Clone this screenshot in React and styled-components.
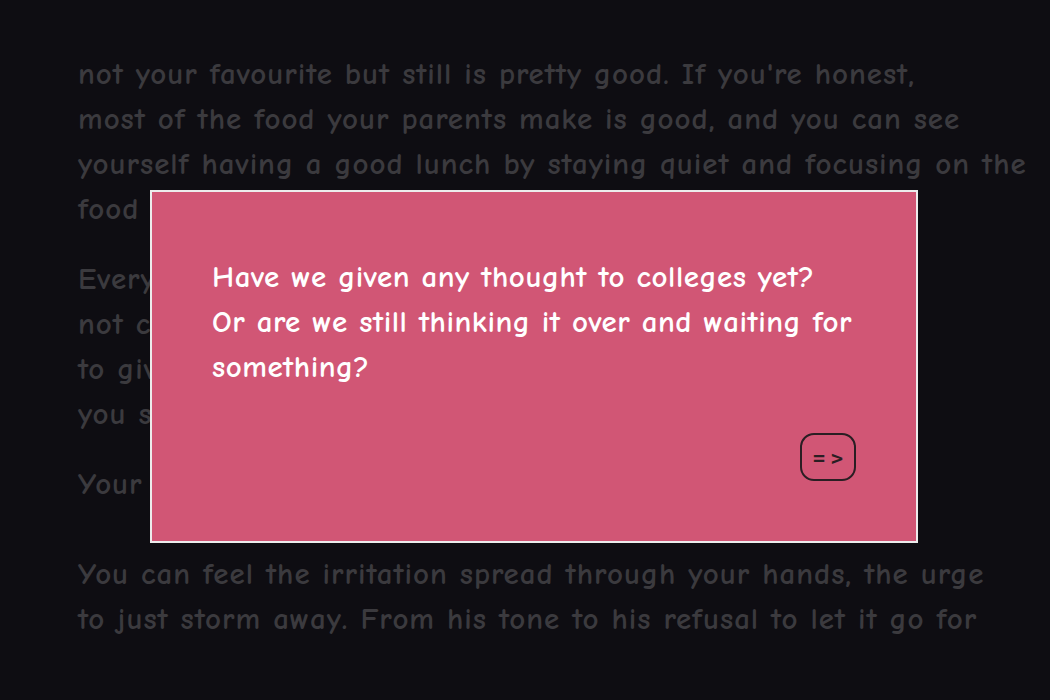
import React from 'react';
import styled, { createGlobalStyle } from 'styled-components';

const GlobalStyle = createGlobalStyle`
  html, body {
    margin: 0;
    padding: 0;
    background: #0e0d12;
  }
  body {
    font-family: "Comic Sans MS", "Comic Neue", "DejaVu Sans", sans-serif;
  }
`;

const Page = styled.div`
  width: 100%;
  height: 100vh;
  overflow: hidden;
  background: #0e0d12;
`;

const Story = styled.div`
  padding: 52px 0 0 78px;
  color: #3b3a3e;
  font-size: 31px;
  font-weight: 700;
  letter-spacing: 0.95px;
  line-height: 45px;
  white-space: nowrap;
`;

const Para = styled.p`
  margin: 0 0 ${(p) => (p.$wide ? '45px' : '25px')};
`;

const Overlay = styled.div`
  position: fixed;
  left: 150px;
  top: 190px;
  width: 768px;
  height: 353px;
  box-sizing: border-box;
  border: 2px solid #ececec;
  background: #d15675;
  padding: 60px;
  display: flex;
  flex-direction: column;
`;

const Question = styled.p`
  margin: 3px 0 0;
  color: #ffffff;
  font-size: 31px;
  font-weight: 700;
  letter-spacing: 0.5px;
  line-height: 45px;
  white-space: nowrap;
`;

const NextButton = styled.button`
  margin-top: auto;
  align-self: flex-end;
  width: 56px;
  height: 48px;
  border: 2px solid #2a1e23;
  border-radius: 14px;
  background: transparent;
  color: #2a1e23;
  font-family: "DejaVu Sans Mono", monospace;
  font-weight: bold;
  font-size: 20px;
  letter-spacing: 6px;
  padding: 2px 0 0 6px;
  display: flex;
  align-items: center;
  justify-content: center;
  cursor: pointer;
`;

export default function App() {
  return (
    <Page>
      <GlobalStyle />
      <Story>
        <Para>
          not your favourite but still is pretty good. If you're honest,<br />
          most of the food your parents make is good, and you can see<br />
          yourself having a good lunch by staying quiet and focusing on the<br />
          food in front of you.
        </Para>
        <Para>
          Every now and then your dad asks a question or two, but<br />
          not casually, more like he's checking if you're able<br />
          to give him an answer he'll be pleased with, and<br />
          you stay quiet.
        </Para>
        <Para $wide>Your mom clears her throat.</Para>
        <Para>
          You can feel the irritation spread through your hands, the urge<br />
          to just storm away. From his tone to his refusal to let it go for
        </Para>
      </Story>
      <Overlay>
        <Question>
          Have we given any thought to colleges yet?<br />
          Or are we still thinking it over and waiting for<br />
          something?
        </Question>
        <NextButton>=&gt;</NextButton>
      </Overlay>
    </Page>
  );
}
